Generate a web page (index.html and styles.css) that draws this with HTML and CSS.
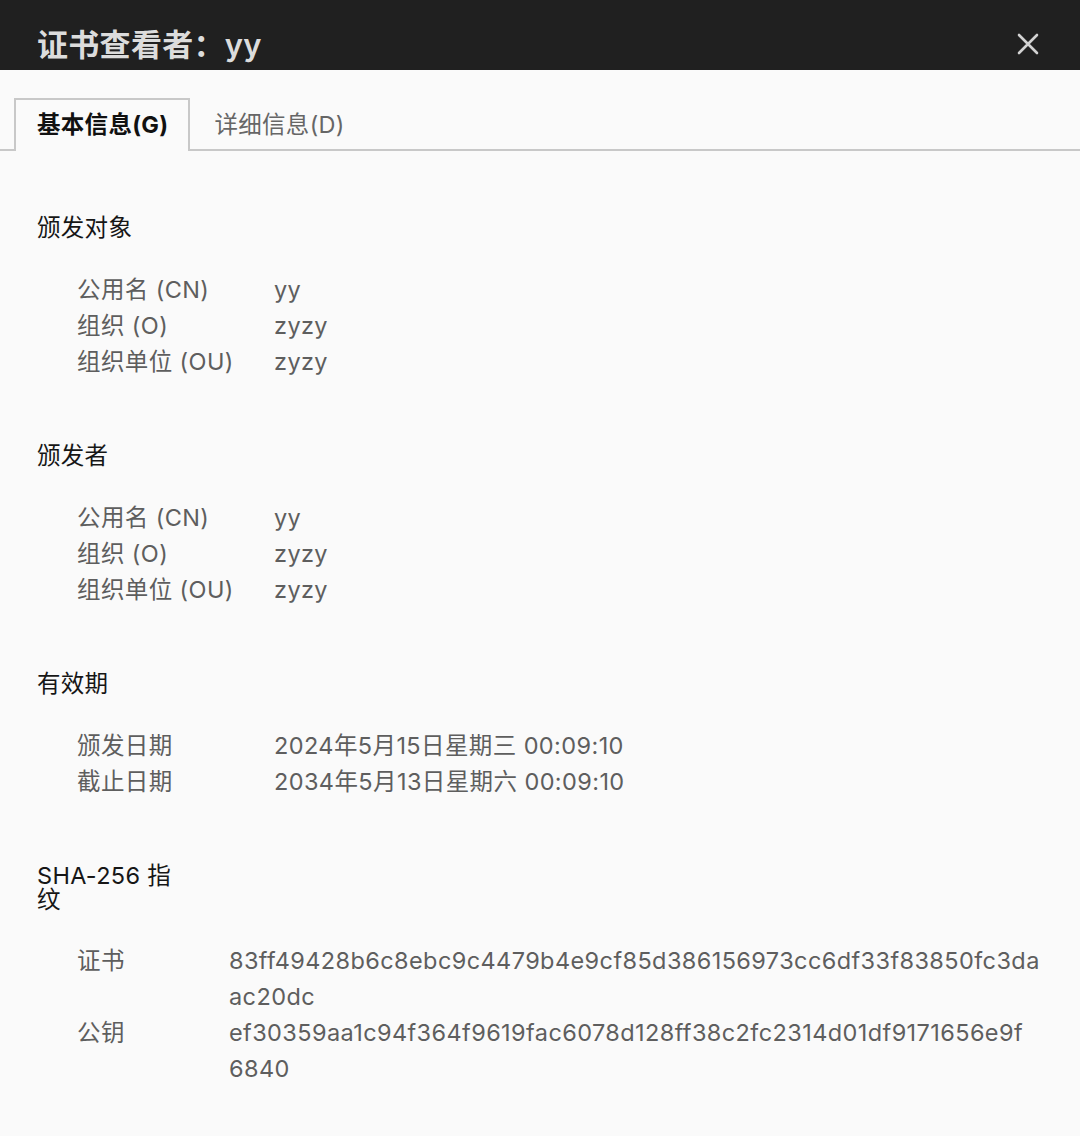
FILE: index.html
```html
<!DOCTYPE html>
<html lang="zh-CN">
<head>
    <meta charset="UTF-8">
    <title>证书查看者：yy</title>
    <link rel="stylesheet" href="styles.css">
</head>
<body>
    <div class="titlebar">
        <h1 class="title">证书查看者：yy</h1>
        <button class="close" aria-label="关闭">
            <svg width="22" height="22" viewBox="0 0 22 22">
                <path d="M2 2 L20 20 M20 2 L2 20" stroke="#d2d2d2" stroke-width="2.6" stroke-linecap="round"/>
            </svg>
        </button>
    </div>

    <div class="tabs">
        <div class="tab active">基本信息(G)</div>
        <div class="tab">详细信息(D)</div>
    </div>

    <div class="content">
        <section class="group">
            <h2 class="group-title">颁发对象</h2>
            <div class="fields">
                <div class="label">公用名 (CN)</div><div class="value">yy</div>
                <div class="label">组织 (O)</div><div class="value">zyzy</div>
                <div class="label">组织单位 (OU)</div><div class="value">zyzy</div>
            </div>
        </section>

        <section class="group">
            <h2 class="group-title">颁发者</h2>
            <div class="fields">
                <div class="label">公用名 (CN)</div><div class="value">yy</div>
                <div class="label">组织 (O)</div><div class="value">zyzy</div>
                <div class="label">组织单位 (OU)</div><div class="value">zyzy</div>
            </div>
        </section>

        <section class="group">
            <h2 class="group-title">有效期</h2>
            <div class="fields">
                <div class="label">颁发日期</div><div class="value">2024年5月15日星期三 00:09:10</div>
                <div class="label">截止日期</div><div class="value">2034年5月13日星期六 00:09:10</div>
            </div>
        </section>

        <section class="group">
            <h2 class="group-title narrow">SHA-256 指纹</h2>
            <div class="fields hashes">
                <div class="label">证书</div><div class="value">83ff49428b6c8ebc9c4479b4e9cf85d386156973cc6df33f83850fc3da<br>ac20dc</div>
                <div class="label">公钥</div><div class="value">ef30359aa1c94f364f9619fac6078d128ff38c2fc2314d01df9171656e9f<br>6840</div>
            </div>
        </section>
    </div>
</body>
</html>
```

FILE: styles.css
```css
body {
    margin: 0;
    background-color: #fafafa;
    font-family: "Inter", "Noto Sans CJK SC", sans-serif;
    color: #161616;
}
.titlebar {
    height: 70px;
    background-color: #202020;
    display: flex;
    align-items: center;
    justify-content: space-between;
    padding: 0 41px 0 37px;
    box-sizing: border-box;
}
.title {
    margin: 14px 0 0;
    font-size: 31px;
    font-weight: 600;
    letter-spacing: 0.3px;
    color: #dcdcdc;
}
.close {
    background: none;
    border: none;
    padding: 0;
    margin-top: 18px;
    width: 22px;
    height: 22px;
    cursor: pointer;
}
.tabs {
    display: flex;
    margin-top: 28px;
    padding-left: 14px;
    border-bottom: 2px solid #c8c8c8;
    height: 51px;
}
.tab {
    padding: 0 21px 0 22px;
    font-size: 23.5px;
    letter-spacing: 0.3px;
    line-height: 50px;
    color: #666;
    border: 2px solid transparent;
    border-bottom: none;
}
.tab.active {
    color: #111;
    font-weight: 700;
    border-color: #c8c8c8;
    background-color: #fafafa;
    height: 51px;
    padding-left: 21px;
    padding-right: 20px;
}
.content {
    padding: 0 30px 0 37px;
}
.group {
    margin-top: 62px;
}
.group + .group {
    margin-top: 61px;
}
.group-title {
    margin: 0;
    font-size: 23.5px;
    font-weight: 400;
    line-height: 30px;
    letter-spacing: 0.3px;
}
.group-title.narrow {
    width: 140px;
    line-height: 24px;
    margin-top: 64px;
}
.fields {
    display: grid;
    grid-template-columns: 197px 1fr;
    margin-top: 29px;
    padding-left: 40px;
    font-size: 23.5px;
    line-height: 36px;
    letter-spacing: 0.4px;
    color: #5e5e5e;
}
.fields.hashes {
    grid-template-columns: 152px 1fr;
    margin-top: 31px;
}
.hashes .value {
    word-break: break-all;
}
```
